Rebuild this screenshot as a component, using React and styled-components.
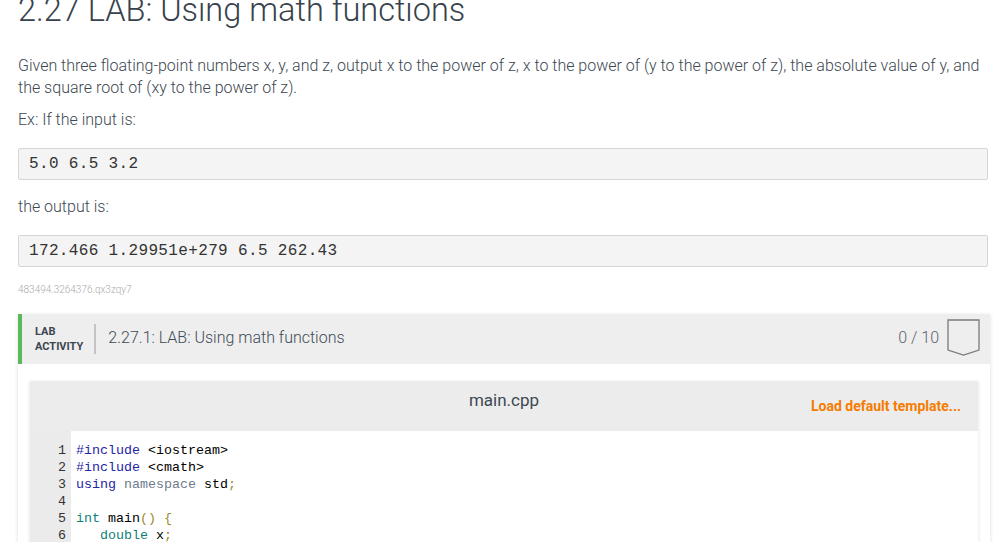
import React from 'react';
import styled, { createGlobalStyle } from 'styled-components';

const GlobalStyle = createGlobalStyle`
  body {
    margin: 0;
    background: #fff;
    font-family: Roboto, "Noto Sans", sans-serif;
    overflow: hidden;
  }
`;

const Page = styled.div`
  padding: 0 20px 0 18px;
  color: #3d4852;
`;

const Title = styled.h1`
  font-size: 32.5px;
  font-weight: 300;
  line-height: 40px;
  margin: -10px 0 25px;
  color: #37424c;
`;

const Para = styled.p`
  font-size: 16px;
  font-weight: 300;
  line-height: 22px;
  margin: 0 0 10px;
`;

const CodeBlock = styled.pre`
  margin: 17px 0 16px;
  padding: 0 10px;
  height: 30px;
  display: flex;
  align-items: center;
  background: #f4f4f4;
  border: 1px solid #d6d6d6;
  border-radius: 2px;
  font-family: "Liberation Mono", monospace;
  font-size: 16px;
  letter-spacing: 0.35px;
  color: #333;
`;

const Ident = styled.div`
  font-size: 10px;
  line-height: 10px;
  font-weight: 300;
  color: #aaa;
  margin: 18px 0 19px;
`;

const Activity = styled.section`
  margin-right: -2px;
  box-shadow: 0 1px 4px rgba(0, 0, 0, 0.14);
  background: #fff;
`;

const ActivityHeader = styled.header`
  height: 50px;
  box-sizing: border-box;
  background: #eee;
  border-left: 4px solid #5cb85c;
  display: flex;
  align-items: center;
  padding: 0 10px 2px 13px;
`;

const Kind = styled.div`
  font-size: 11px;
  font-weight: 700;
  line-height: 15px;
  color: #3b4650;
  padding-right: 11px;
  border-right: 2px solid #c4c4c4;
  margin-top: 2px;
`;

const ActivityTitle = styled.div`
  flex: 1;
  padding-left: 12px;
  font-size: 16px;
  font-weight: 300;
  color: #404b55;
  margin-top: -1px;
`;

const Score = styled.div`
  font-size: 16px;
  font-weight: 300;
  color: #5a646c;
  margin-right: 8px;
  margin-top: -1px;
`;

const Body = styled.div`
  padding: 17px 12px 0;
`;

const Editor = styled.div`
  box-shadow: 0 1px 4px rgba(0, 0, 0, 0.12);
`;

const EditorHeader = styled.div`
  height: 50px;
  background: #ececec;
  display: grid;
  grid-template-columns: 1fr auto 1fr;
  align-items: center;
  padding: 0 17px;
`;

const FileName = styled.div`
  font-size: 17px;
  color: #3d4852;
  margin-top: -12px;
`;

const LoadLink = styled.a`
  justify-self: end;
  font-size: 14px;
  font-weight: 700;
  color: #f57c00;
  cursor: pointer;
  margin-top: -1px;
`;

const CodeArea = styled.div`
  display: flex;
  font-family: "Liberation Mono", monospace;
  font-size: 13.33px;
  line-height: 17px;
  background: #fff;
`;

const Gutter = styled.div`
  width: 41px;
  background: #ebebeb;
  padding: 11px 5px 20px 0;
  box-sizing: border-box;
  text-align: right;
  color: #333;
`;

const Lines = styled.div`
  padding: 11px 0 20px 5px;
  color: #000;
  white-space: pre;
`;

const Tok = styled.span`
  color: ${({ k }) =>
    ({
      pre: '#2424a8',
      kw: '#2424a8',
      ns: '#6d7b8d',
      type: '#0f7f7a',
      punct: '#9b8a2c',
    }[k] || '#000')};
`;

const Badge = () => (
  <svg width="33" height="38" viewBox="0 0 33 38">
    <path d="M1 1 H32 V31 L16.5 36 L1 31 Z" fill="none" stroke="#7a7a7a" strokeWidth="1.3" />
  </svg>
);

const code = [
  [['pre', '#include'], ['', ' <iostream>']],
  [['pre', '#include'], ['', ' <cmath>']],
  [['kw', 'using'], ['', ' '], ['ns', 'namespace'], ['', ' std'], ['punct', ';']],
  [],
  [['type', 'int'], ['', ' main'], ['punct', '()'], ['', ' '], ['punct', '{']],
  [['', '   '], ['type', 'double'], ['', ' x'], ['punct', ';']],
];

export default function App() {
  return (
    <>
      <GlobalStyle />
      <Page>
        <Title>2.27 LAB: Using math functions</Title>
        <Para>
          Given three floating-point numbers x, y, and z, output x to the power of z, x to the power of (y to the
          power of z), the absolute value of y, and the square root of (xy to the power of z).
        </Para>
        <Para>Ex: If the input is:</Para>
        <CodeBlock>5.0 6.5 3.2</CodeBlock>
        <Para>the output is:</Para>
        <CodeBlock>172.466 1.29951e+279 6.5 262.43</CodeBlock>
        <Ident>483494.3264376.qx3zqy7</Ident>
        <Activity>
          <ActivityHeader>
            <Kind>
              LAB
              <br />
              ACTIVITY
            </Kind>
            <ActivityTitle>2.27.1: LAB: Using math functions</ActivityTitle>
            <Score>0 / 10</Score>
            <Badge />
          </ActivityHeader>
          <Body>
            <Editor>
              <EditorHeader>
                <span />
                <FileName>main.cpp</FileName>
                <LoadLink>Load default template...</LoadLink>
              </EditorHeader>
              <CodeArea>
                <Gutter>
                  {code.map((_, i) => (
                    <div key={i}>{i + 1}</div>
                  ))}
                </Gutter>
                <Lines>
                  {code.map((line, i) => (
                    <div key={i}>
                      {line.length === 0
                        ? ' '
                        : line.map(([k, t], j) => (
                            <Tok key={j} k={k}>
                              {t}
                            </Tok>
                          ))}
                    </div>
                  ))}
                </Lines>
              </CodeArea>
            </Editor>
          </Body>
        </Activity>
      </Page>
    </>
  );
}
